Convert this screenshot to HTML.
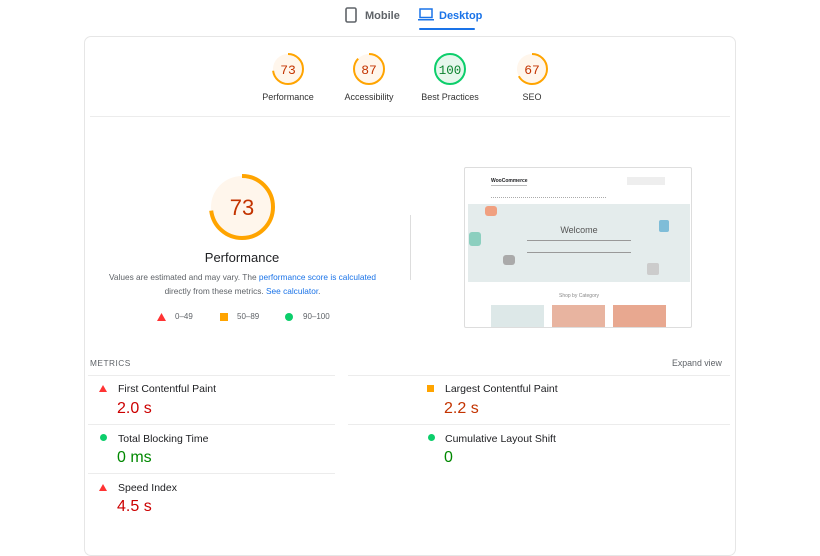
<!DOCTYPE html>
<html><head><meta charset="utf-8"><style>
*{margin:0;padding:0;box-sizing:border-box}
html,body{width:820px;height:524px}
body{background:#fff;font-family:"Liberation Sans",Arial,sans-serif;position:relative;overflow:hidden;color:#202124}
.abs{position:absolute}
.tab{font-size:11px;font-weight:bold;top:10px}
.card{left:84px;top:36px;width:652px;height:520px;border:1px solid #e6e6e6;border-radius:7px}
.g{position:absolute;text-align:center;width:90px;font-size:9px;color:#333}
.g svg{display:block;margin:0 auto 6px}
.lbl{font-size:10.5px;color:#202124}
.val{font-size:16px}
.hr{position:absolute;height:1px;background:#ececec}
</style></head><body>
<svg class="abs" style="left:345px;top:7px" width="12" height="16" viewBox="0 0 12 16"><rect x="1" y="1" width="10" height="14" rx="1.5" fill="none" stroke="#5f6368" stroke-width="1.6"/></svg>
<div class="abs tab" style="left:365px;color:#5f6368">Mobile</div>
<svg class="abs" style="left:418px;top:8px" width="16" height="13" viewBox="0 0 16 13"><rect x="2" y="1" width="12" height="8.5" fill="none" stroke="#1a73e8" stroke-width="1.5"/><rect x="0" y="11" width="16" height="1.5" fill="#1a73e8"/></svg>
<div class="abs tab" style="left:439px;color:#1a73e8">Desktop</div>
<div class="abs" style="left:419px;top:28px;width:56px;height:2px;background:#1a73e8;border-radius:1px"></div>

<div class="abs card"></div>

<div class="g" style="left:243px;top:52px"><svg width="34" height="34" viewBox="0 0 34 34"><circle cx="17" cy="17" r="15" fill="#fff6ec"/><circle cx="17" cy="17" r="15" fill="none" stroke="#ffa400" stroke-width="2" stroke-dasharray="68.8 100" transform="rotate(-90 17 17)"/><text x="17" y="22" text-anchor="middle" font-family="Liberation Mono,monospace" font-size="13" fill="#c33300">73</text></svg>Performance</div>
<div class="g" style="left:324px;top:52px"><svg width="34" height="34" viewBox="0 0 34 34"><circle cx="17" cy="17" r="15" fill="#fff6ec"/><circle cx="17" cy="17" r="15" fill="none" stroke="#ffa400" stroke-width="2" stroke-dasharray="82 100" transform="rotate(-90 17 17)"/><text x="17" y="22" text-anchor="middle" font-family="Liberation Mono,monospace" font-size="13" fill="#c33300">87</text></svg>Accessibility</div>
<div class="g" style="left:405px;top:52px"><svg width="34" height="34" viewBox="0 0 34 34"><circle cx="17" cy="17" r="15" fill="#e6f7ec"/><circle cx="17" cy="17" r="15" fill="none" stroke="#0cce6b" stroke-width="2"/><text x="17" y="22" text-anchor="middle" font-family="Liberation Mono,monospace" font-size="12.5" fill="#08802b">100</text></svg>Best Practices</div>
<div class="g" style="left:487px;top:52px"><svg width="34" height="34" viewBox="0 0 34 34"><circle cx="17" cy="17" r="15" fill="#fff6ec"/><circle cx="17" cy="17" r="15" fill="none" stroke="#ffa400" stroke-width="2" stroke-dasharray="63.1 100" transform="rotate(-90 17 17)"/><text x="17" y="22" text-anchor="middle" font-family="Liberation Mono,monospace" font-size="13" fill="#c33300">67</text></svg>SEO</div>

<div class="hr" style="left:90px;top:116px;width:640px"></div>

<svg class="abs" style="left:208px;top:173px" width="68" height="68" viewBox="0 0 68 68"><circle cx="34" cy="34" r="31" fill="#fff6ec"/><circle cx="34" cy="34" r="31" fill="none" stroke="#ffa400" stroke-width="4" stroke-dasharray="142.2 300" transform="rotate(-90 34 34)"/><text x="34" y="42" text-anchor="middle" font-family="Liberation Sans,sans-serif" font-size="22" fill="#c33300">73</text></svg>
<div class="abs" style="left:150px;top:250px;width:184px;text-align:center;font-size:13px">Performance</div>
<div class="abs" style="left:100px;top:271px;width:285px;text-align:center;font-size:8.3px;line-height:13.5px;color:#5f6368">Values are estimated and may vary. The <span style="color:#1a73e8">performance score is calculated</span> directly from these metrics. <span style="color:#1a73e8">See calculator</span>.</div>
<svg class="abs" style="left:157px;top:313px" width="9" height="8"><polygon points="4.5,0 9,8 0,8" fill="#ff3333"/></svg>
<div class="abs" style="left:175px;top:312px;font-size:8px;color:#5f6368">0–49</div>
<div class="abs" style="left:220px;top:313px;width:8px;height:8px;background:#ffa400"></div>
<div class="abs" style="left:237px;top:312px;font-size:8px;color:#5f6368">50–89</div>
<div class="abs" style="left:285px;top:313px;width:8px;height:8px;border-radius:50%;background:#0cce6b"></div>
<div class="abs" style="left:303px;top:312px;font-size:8px;color:#5f6368">90–100</div>

<div class="abs" style="left:410px;top:215px;width:1px;height:65px;background:#ddd"></div>

<div class="abs" style="left:464px;top:167px;width:228px;height:161px;border:1px solid #ddd;border-radius:2px;overflow:hidden;background:#fff">
 <div class="abs" style="left:26px;top:10px;font-size:5px;font-weight:bold">WooCommerce</div>
 <div class="abs" style="left:26px;top:17px;width:36px;height:1px;background:#bbb"></div>
 <div class="abs" style="left:162px;top:9px;width:38px;height:8px;background:#eee"></div>
 <div class="abs" style="left:26px;top:29px;width:115px;height:1px;border-top:1px dotted #aaa"></div>
 <div class="abs" style="left:3px;top:36px;width:222px;height:78px;background:#e4ecec"></div>
 <div class="abs" style="left:3px;top:57px;width:222px;text-align:center;font-size:9px;color:#555">Welcome</div>
 <div class="abs" style="left:62px;top:72px;width:104px;height:1px;background:#999"></div>
 <div class="abs" style="left:62px;top:84px;width:104px;height:1px;background:#999"></div>
 <div class="abs" style="left:20px;top:38px;width:12px;height:10px;background:#f0a080;border-radius:3px"></div>
 <div class="abs" style="left:4px;top:64px;width:12px;height:14px;background:#8ccfbf;border-radius:3px"></div>
 <div class="abs" style="left:194px;top:52px;width:10px;height:12px;background:#7fbdd8;border-radius:2px"></div>
 <div class="abs" style="left:182px;top:95px;width:12px;height:12px;background:#ccc;border-radius:2px"></div>
 <div class="abs" style="left:38px;top:87px;width:12px;height:10px;background:#aaa;border-radius:3px"></div>
 <div class="abs" style="left:3px;top:125px;width:222px;text-align:center;font-size:5px;color:#888">Shop by Category</div>
 <div class="abs" style="left:26px;top:137px;width:53px;height:24px;background:#dde8e8"></div>
 <div class="abs" style="left:87px;top:137px;width:53px;height:24px;background:#e8b4a0"></div>
 <div class="abs" style="left:148px;top:137px;width:53px;height:24px;background:#e8a890"></div>
</div>

<div class="abs" style="left:90px;top:358px;font-size:8.3px;color:#5f6368;letter-spacing:.5px">METRICS</div>
<div class="abs" style="left:672px;top:358px;font-size:8.8px;color:#5f6368">Expand view</div>

<div class="hr" style="left:88px;top:375px;width:247px"></div>
<div class="hr" style="left:348px;top:375px;width:382px"></div>
<div class="hr" style="left:88px;top:424px;width:247px"></div>
<div class="hr" style="left:348px;top:424px;width:382px"></div>
<div class="hr" style="left:88px;top:473px;width:247px"></div>

<svg class="abs" style="left:99px;top:385px" width="8" height="7"><polygon points="4,0 8,7 0,7" fill="#ff3333"/></svg>
<div class="abs lbl" style="left:118px;top:383px">First Contentful Paint</div>
<div class="abs val" style="left:117px;top:400px;color:#c00">2.0 s</div>
<div class="abs" style="left:427px;top:385px;width:7px;height:7px;background:#ffa400"></div>
<div class="abs lbl" style="left:445px;top:383px">Largest Contentful Paint</div>
<div class="abs val" style="left:444px;top:400px;color:#c33300">2.2 s</div>

<div class="abs" style="left:100px;top:434px;width:7px;height:7px;border-radius:50%;background:#0cce6b"></div>
<div class="abs lbl" style="left:118px;top:433px">Total Blocking Time</div>
<div class="abs val" style="left:117px;top:449px;color:#080">0 ms</div>
<div class="abs" style="left:428px;top:434px;width:7px;height:7px;border-radius:50%;background:#0cce6b"></div>
<div class="abs lbl" style="left:445px;top:433px">Cumulative Layout Shift</div>
<div class="abs val" style="left:444px;top:449px;color:#080">0</div>

<svg class="abs" style="left:99px;top:484px" width="8" height="7"><polygon points="4,0 8,7 0,7" fill="#ff3333"/></svg>
<div class="abs lbl" style="left:118px;top:482px">Speed Index</div>
<div class="abs val" style="left:117px;top:498px;color:#c00">4.5 s</div>
</body></html>
